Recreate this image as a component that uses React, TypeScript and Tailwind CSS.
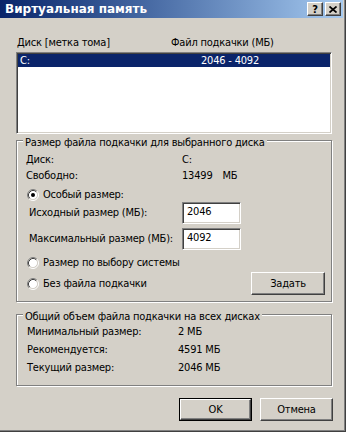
import React from 'react'

const raised =
  'bg-[#d4d0c8] border border-t-white border-l-white border-r-[#404040] border-b-[#404040] shadow-[inset_-1px_-1px_0_#808080,inset_1px_1px_0_#d4d0c8]'
const sunken =
  'border border-t-[#808080] border-l-[#808080] border-r-white border-b-white shadow-[inset_1px_1px_0_#404040,inset_-1px_-1px_0_#d4d0c8]'
const etched =
  'border border-[#808080] shadow-[inset_1px_1px_0_#ffffff,1px_1px_0_#ffffff]'

function Radio({ checked }: { checked?: boolean }) {
  return (
    <svg width="12" height="12" viewBox="0 0 12 12" className="shrink-0">
      <circle cx="6" cy="6" r="4.5" fill="#ffffff" />
      <path d="M2.11 9.89 A5.5 5.5 0 0 1 9.89 2.11" fill="none" stroke="#808080" />
      <path d="M9.89 2.11 A5.5 5.5 0 0 1 2.11 9.89" fill="none" stroke="#ffffff" />
      <path d="M2.82 9.18 A4.5 4.5 0 0 1 9.18 2.82" fill="none" stroke="#404040" />
      <path d="M9.18 2.82 A4.5 4.5 0 0 1 2.82 9.18" fill="none" stroke="#d4d0c8" />
      {checked && <circle cx="6" cy="6" r="2" fill="#000000" />}
    </svg>
  )
}

function Field({ value }: { value: string }) {
  return (
    <div className={`w-[59px] h-[22px] bg-white pl-[4px] pb-[2px] flex items-center ${sunken}`}>
      {value}
    </div>
  )
}

export default function App() {
  return (
    <div className="w-[346px] h-[432px] overflow-hidden bg-[#d4d0c8] border-r border-b border-[#404040] shadow-[inset_-1px_-1px_0_#808080] font-['DejaVu_Sans_Condensed','DejaVu_Sans','Liberation_Sans',sans-serif] text-[11px] leading-[14px] tracking-[-0.2px] text-black">
      {/* title bar */}
      <div className="h-[18px] mr-[2px] flex items-center bg-gradient-to-r from-[#0a246a] to-[#a6caf0]">
        <span className="pl-[5px] text-white font-bold text-[12px] font-['DejaVu_Sans',sans-serif] tracking-normal">
          Виртуальная память
        </span>
        <div className="ml-auto flex gap-[2px] pr-[2px]">
          <div className={`w-[16px] h-[14px] flex items-center justify-center font-bold text-[11px] leading-none ${raised}`}>
            ?
          </div>
          <div className={`w-[16px] h-[14px] flex items-center justify-center ${raised}`}>
            <svg width="8" height="7" viewBox="0 0 8 7">
              <path d="M0.5 0.5 L7.5 6.5 M7.5 0.5 L0.5 6.5" stroke="#000" strokeWidth="1.7" />
            </svg>
          </div>
        </div>
      </div>

      <div className="pl-[16px] w-[333px]">
        <div className="mt-[18px] flex h-[14px]">
          <span className="pl-[1px] w-[155px]">Диск [метка тома]</span>
          <span>Файл подкачки (МБ)</span>
        </div>

        <div className={`mt-[2px] w-[316px] h-[82px] bg-white p-[1px] ${sunken}`}>
          <div className="h-[13px] bg-[#0a246a] text-white flex items-center">
            <span className="pl-[2px] w-[183px]">C:</span>
            <span>2046 - 4092</span>
          </div>
        </div>

        <fieldset className={`mt-[2px] w-[316px] px-[6px] pb-[6px] ${etched}`}>
          <legend className="h-[8px] px-[2px] bg-[#d4d0c8] leading-[14px]">
            Размер файла подкачки для выбранного диска
          </legend>
          <div className="pl-[3px]">
            <div className="mt-[8px] flex h-[16px] items-center">
              <span className="w-[156px]">Диск:</span>
              <span>C:</span>
            </div>
            <div className="flex h-[16px] items-center">
              <span className="w-[156px]">Свободно:</span>
              <span>13499</span>
              <span className="ml-[10px]">МБ</span>
            </div>
            <div className="mt-[4px] flex h-[14px] items-center pl-[1px] gap-[4px]">
              <Radio checked />
              <span>Особый размер:</span>
            </div>
            <div className="flex h-[22px] items-center">
              <span className="pl-[3px] w-[156px]">Исходный размер (МБ):</span>
              <Field value="2046" />
            </div>
            <div className="mt-[4px] flex h-[22px] items-center">
              <span className="pl-[3px] w-[156px]">Максимальный размер (МБ):</span>
              <Field value="4092" />
            </div>
            <div className="mt-[6px] flex h-[14px] items-center pl-[1px] gap-[4px]">
              <Radio />
              <span>Размер по выбору системы</span>
            </div>
            <div className="mt-[2px] flex h-[23px] items-center pl-[1px] gap-[4px]">
              <Radio />
              <span>Без файла подкачки</span>
              <button className={`ml-auto w-[74px] h-[23px] flex items-center justify-center ${raised}`}>
                Задать
              </button>
            </div>
          </div>
        </fieldset>

        <fieldset className={`mt-[8px] w-[316px] px-[6px] pb-[8px] ${etched}`}>
          <legend className="h-[8px] px-[2px] bg-[#d4d0c8] leading-[14px]">
            Общий объем файла подкачки на всех дисках
          </legend>
          <div className="mt-[5px]">
            <div className="flex h-[18px] items-center">
              <span className="pl-[4px] w-[155px]">Минимальный размер:</span>
              <span>2 МБ</span>
            </div>
            <div className="flex h-[18px] items-center">
              <span className="pl-[4px] w-[155px]">Рекомендуется:</span>
              <span>4591 МБ</span>
            </div>
            <div className="flex h-[18px] items-center">
              <span className="pl-[4px] w-[155px]">Текущий размер:</span>
              <span>2046 МБ</span>
            </div>
          </div>
        </fieldset>

        <div className="mt-[12px] w-[317px] flex justify-end gap-[8px]">
          <div className="w-[73px] h-[23px] border border-black">
            <button className={`w-full h-full flex items-center justify-center ${raised}`}>OK</button>
          </div>
          <button className={`w-[73px] h-[23px] flex items-center justify-center ${raised}`}>Отмена</button>
        </div>
      </div>
    </div>
  )
}
